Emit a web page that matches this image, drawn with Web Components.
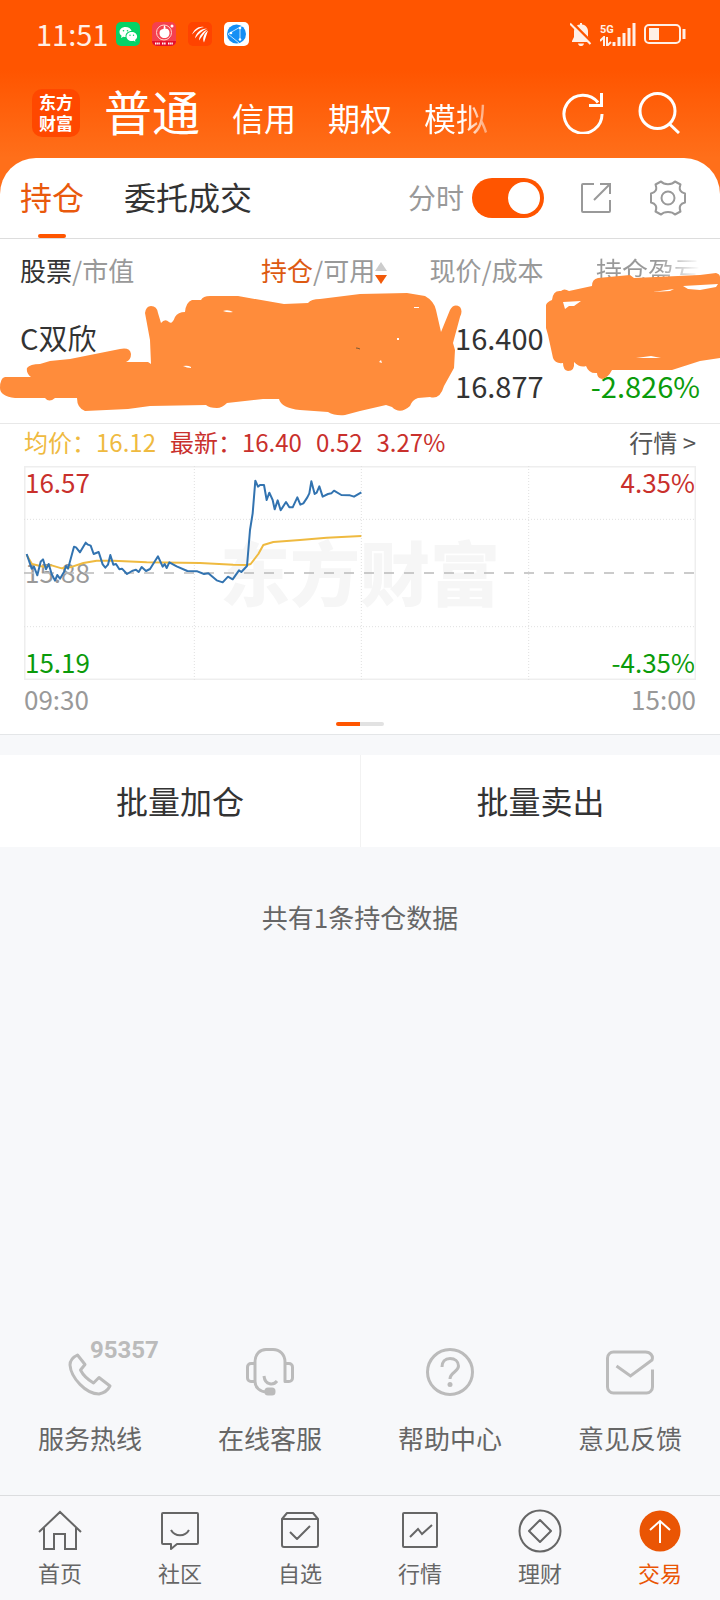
<!DOCTYPE html>
<html lang="zh-CN">
<head>
<meta charset="utf-8">
<meta name="viewport" content="width=device-width, initial-scale=1">
<title>东方财富 - 交易</title>
<style>
  body {
    margin: 0;
    background: #f7f8fa;
    color: #333;
    font-family: "Noto Sans CJK SC", "Noto Sans", sans-serif;
  }
</style>
</head>
<body>
<trade-app></trade-app>

<script>
const BASE = `
  :host, * { box-sizing: border-box; }
  p, input, th, td { margin: 0; padding: 0; }
  svg { display: block; fill: none; stroke: currentColor; }
  button { padding: 0; font: inherit; color: inherit; background: none; border: 0; cursor: pointer; }
  a { color: inherit; text-decoration: none; }
`;

class BaseElement extends HTMLElement {
  constructor() {
    super();
    this.attachShadow({ mode: 'open' });
  }

  connectedCallback() {
    this.shadowRoot.innerHTML = `<style>${BASE}${this.styles()}</style>${this.markup()}`;
  }
}

class StatusBar extends BaseElement {
  styles() {
    return `
      :host {
        display: flex;
        align-items: center;
        height: 68px;
        padding: 0 34px 0 36px;
        color: #ffefe6;
      }
      time { font-size: 29px; line-height: 32px; padding-bottom: 2px; }
      .apps { display: flex; gap: 12px; margin-left: 8px; }
      .state { display: flex; align-items: center; gap: 8px; margin-left: auto; }
      .signal { display: flex; align-items: flex-end; }
      .net { width: 12px; font: 700 11px/12px Roboto, sans-serif; }
    `;
  }

  markup() {
    return `
      <time>11:51</time>
      <div class="apps">
        <svg width="24" height="24" viewBox="0 0 24 24">
          <rect width="24" height="24" rx="5" fill="#06d266" stroke="none"/>
          <path fill="#fff" stroke="none" d="M9.500 5C6 5 3.500 7.200 3.500 10c0 1.600.8 2.900 2.100 3.800L5 16l2.400-1.200c.8.2 1.500.3 2.200.3-.6-3.400 2.300-6 6-6C15 6.600 12.500 5 9.500 5z"/>
          <path fill="#fff" stroke="none" d="M15.800 10c-3 0-5.300 2-5.300 4.500s2.300 4.500 5.300 4.500c.6 0 1.200-.1 1.800-.3l1.900 1-.5-1.700c1.300-.8 2.100-2.100 2.100-3.500 0-2.500-2.400-4.500-5.300-4.500z"/>
          <g fill="#06d266" stroke="none"><circle cx="7.500" cy="8.700" r=".8"/><circle cx="11.500" cy="8.700" r=".8"/><circle cx="14" cy="13.200" r=".7"/><circle cx="17.500" cy="13.200" r=".7"/></g>
        </svg>
        <svg width="24" height="24" viewBox="0 0 24 24">
          <rect width="24" height="24" rx="5" fill="#f5404e" stroke="none"/>
          <path d="M0 19h24a5 5 0 0 1-5 5H5a5 5 0 0 1-5-5z" fill="#e50f2a" stroke="none"/>
          <circle cx="12" cy="10.500" r="7.500" stroke="#ffd7d0"/>
          <path fill="#fff" stroke="none" d="M12 3c1 1 2 2 1.500 4 2-1 4 1 4 4 0 3-2 5-5 5s-5-2-5-5 2-4 4-4z"/>
          <circle cx="20" cy="4" r="1.500" fill="#fff" stroke="none"/>
          <path d="M3 21.500h5M10 21.500h4M16 21.500h5" stroke="#fff" stroke-width="2" stroke-dasharray="1.500 .6"/>
        </svg>
        <svg width="24" height="24" viewBox="0 0 24 24">
          <rect width="24" height="24" rx="5" fill="#ff4300" stroke="none"/>
          <path fill="#fff" stroke="none" d="M4 12.500C6 7 11 3.500 16 5c-4 .5-8 3-12 7.500zM7 16.500c1-6 6-10 12-10-5 2-8 5-12 10zM11 18.500c0-5 4-9 8.500-11C16.500 11 14 14 11 18.500zM16 20.500c-2-4 0-9 4-12-1.500 4-2.500 8-4 12z"/>
        </svg>
        <svg width="25" height="24" viewBox="0 0 25 24">
          <rect width="25" height="24" rx="5" fill="#fff" stroke="none"/>
          <circle cx="12.500" cy="12" r="9.500" fill="#158ff5" stroke="none"/>
          <path d="M18 4 4 12l11 9M16 6v12" stroke="#bfe4ff"/>
          <g fill="#fff" stroke="none"><circle cx="16" cy="6" r="1.300"/><circle cx="7" cy="11" r="1.300"/><circle cx="16" cy="17.500" r="1.300"/></g>
        </svg>
      </div>
      <div class="state">
        <svg width="22" height="24" viewBox="0 0 22 24">
          <path fill="currentColor" stroke="none" d="M10 1h2v1.500c4 .5 6 3.500 6 7V15l2 4v1H2v-1l2-4V9.500c0-3.500 2-6.500 6-7zM8 21.500h6c-.5 2-1.500 2.500-3 2.500s-2.500-.5-3-2.500z"/>
          <path d="M2.500 1 22 20.500" stroke="#ff5500" stroke-width="2.500"/>
          <path d="M0 1.500 20.500 22" stroke-width="2"/>
        </svg>
        <div class="signal">
          <div class="net">5G<svg width="12" height="10" viewBox="0 0 12 10"><path d="M0 5l4-4v9M7 1v9l4-4" stroke-width="2"/></svg></div>
          <svg width="24" height="23" viewBox="0 0 24 23"><path stroke-width="3" d="M2 23v-4M7 23v-9M12 23V10M17 23V5M22 23V0"/></svg>
        </div>
        <svg width="42" height="22" viewBox="0 0 42 22">
          <rect x="1" y="2" width="35" height="18" rx="4" stroke-width="2"/>
          <path d="M5 5h10v12H5z" fill="currentColor" stroke="none"/>
          <path d="M40 6v10" stroke-width="3"/>
        </svg>
      </div>
    `;
  }
}

class AccountNav extends BaseElement {
  styles() {
    return `
      :host {
        display: flex;
        align-items: center;
        height: 90px;
        padding: 0 40px 0 32px;
        color: #fff;
      }
      .logo {
        width: 48px;
        height: 48px;
        padding-top: 2px;
        border-radius: 10px;
        background: #ff4800;
        text-align: center;
        font-size: 17px;
        font-weight: 700;
        line-height: 21px;
      }
      nav {
        display: flex;
        align-items: baseline;
        gap: 32px;
        margin-left: 24px;
        font-size: 32px;
        line-height: 48px;
        white-space: nowrap;
      }
      nav .current { font-size: 48px; }
      nav a:last-child {
        background: linear-gradient(90deg, #fff 60%, rgba(255, 255, 255, 0.4));
        background-clip: text;
        color: transparent;
      }
      .tools { display: flex; gap: 34px; margin-left: auto; }
    `;
  }

  markup() {
    return `
      <div class="logo">东方<br>财富</div>
      <nav>
        <a class="current" href="#normal">普通</a>
        <a href="#credit">信用</a>
        <a href="#option">期权</a>
        <a href="#demo">模拟</a>
      </nav>
      <div class="tools">
        <button aria-label="刷新">
          <svg width="42" height="42" viewBox="0 0 42 42" stroke-width="3"><path d="M36 10.500A19 19 0 1 0 40 22M39.500 1v12.500H27"/></svg>
        </button>
        <button aria-label="搜索">
          <svg width="42" height="42" viewBox="0 0 42 42" stroke-width="3"><circle cx="19.500" cy="19" r="17.500"/><path d="M31.500 32 41 41"/></svg>
        </button>
      </div>
    `;
  }
}

class PanelTabs extends BaseElement {
  styles() {
    return `
      :host {
        display: flex;
        align-items: center;
        height: 81px;
        padding: 0 34px 0 20px;
        border-bottom: 1px solid #ddd;
      }
      nav { display: flex; gap: 40px; align-self: stretch; font-size: 32px; }
      nav a { display: flex; flex-direction: column; align-items: center; line-height: 76px; }
      nav .current { color: #e9590c; }
      nav .current::after { content: ""; width: 28px; height: 4px; border-radius: 2px; background: #ff5500; }
      .tools { display: flex; align-items: center; margin-left: auto; color: #999; }
      label { font-size: 28px; line-height: 40px; padding-bottom: 2px; }
      input {
        appearance: none;
        width: 72px;
        height: 40px;
        margin: 0 36px 0 8px;
        padding: 4px;
        border-radius: 20px;
        background: #ccc;
      }
      input::before { content: ""; display: block; width: 32px; height: 32px; border-radius: 50%; background: #fff; }
      input:checked { background: #ff5500; }
      input:checked::before { margin-left: auto; }
      button + button { margin-left: 38px; }
    `;
  }

  markup() {
    return `
      <nav>
        <a class="current" href="#positions">持仓</a>
        <a href="#orders">委托成交</a>
      </nav>
      <div class="tools">
        <label for="minute">分时</label>
        <input id="minute" type="checkbox" role="switch" checked>
        <button aria-label="分享">
          <svg width="32" height="32" viewBox="0 0 32 32" stroke-width="2"><path d="M14 2H3a1 1 0 0 0-1 1v26a1 1 0 0 0 1 1h26a1 1 0 0 0 1-1V18M20 2h10v10M30 2 14 18"/></svg>
        </button>
        <button aria-label="设置">
          <svg width="36" height="36" viewBox="0 0 36 36" stroke-width="2" stroke-linejoin="round"><path d="M11 1.500c3 3.500 11 3.500 14 0l5.500 3c-2 5 0 8 4.500 9v9c-4.500 1-6.500 4-4.500 9l-5.500 3c-3-3.500-11-3.500-14 0l-5.500-3c2-5 0-8-4.500-9v-9c4.500-1 6.500-4 4.500-9z"/><circle cx="18" cy="18" r="6.500"/></svg>
        </button>
      </div>
    `;
  }
}

class HoldingsTable extends BaseElement {
  styles() {
    return `
      :host {
        display: block;
        position: relative;
        padding: 13px 20px 22px;
        border-bottom: 1px solid #e8e8e8;
      }
      table { width: 100%; table-layout: fixed; border-collapse: collapse; text-align: right; white-space: nowrap; }
      th { height: 40px; padding-bottom: 4px; font-size: 26px; font-weight: 400; line-height: 32px; color: #999; }
      th:first-child, td:first-child { width: 31%; text-align: left; }
      th b { font-weight: 400; color: #333; }
      th .sorted { color: #dd5a12; }
      th svg { display: inline-block; vertical-align: -4px; }
      td { height: 48px; font-size: 29px; line-height: 32px; vertical-align: bottom; }
      tr.first td { height: 61px; }
      .fade {
        background: linear-gradient(90deg, #999 60%, #fff);
        background-clip: text;
        color: transparent;
      }
      .down { color: #0b9b0b; }
      .marker { position: absolute; left: 0; top: 0; width: 100%; height: 184px; }
    `;
  }

  markup() {
    return `
      <table>
        <thead>
          <tr>
            <th scope="col"><b>股票</b>/市值</th>
            <th scope="col"><b class="sorted">持仓</b>/可用<svg width="12" height="24" viewBox="0 0 12 24"><path d="M6 1l6 9H0z" fill="#ccc" stroke="none"/><path d="M0 14h12l-6 9z" fill="#f25a0a" stroke="none"/></svg></th>
            <th scope="col">现价/成本</th>
            <th scope="col"><span class="fade">持仓盈亏</span></th>
          </tr>
        </thead>
        <tbody>
          <tr class="first"><td>C双欣</td><td></td><td>16.400</td><td></td></tr>
          <tr><td></td><td></td><td>16.877</td><td class="down">-2.826%</td></tr>
        </tbody>
      </table>
      <svg class="marker" viewBox="0 239 720 184" preserveAspectRatio="none" aria-hidden="true">
        <g fill="#ff8c3b" stroke="none">
          <path d="M145 313Q146 306 151 306 157 306 158 313L161 323Q165 318 169 322 172 325 175 317 178 312 185 312 186 302 192 300L201 300Q203 296 210 296L238 296 284 304 308 303Q311 299 320 299L360 294 407 293 425 296Q434 301 436 310L441 332 450 310Q454 303 460 307 463 311 460 317L453 343 455 350 454 368 444 386Q440 400 430 397L418 398Q412 400 410 406 400 415 392 407L386 405 360 411 345 415Q335 416 328 412L300 410Q281 408 279 399L263 399 227 403Q222 408 217 408 209 408 206 405L150 406 128 409 85 411Q77 408 77 398L55 398Q49 403 45 398L15 398Q0 396 0 388 0 378 5 377L31 377Q26 373 27 368 30 364 40 364L50 361 70 359 120 349Q130 347 131 354 131 360 126 362L148 362 151 364 150 340Z"/>
          <path d="M546 305Q547 302 552 300 553 290 561 291 564 288 569 291L592 286Q592 279 598 278L630 275 634 278 700 275 716 273Q720 274 720 277V358L700 361 672 370 612 370Q608 378 602 379 597 378 597 373 589 374 586 366 580 368 574 362 575 371 568 371 563 370 563 363 555 364 553 358L548 335 546 328Z"/>
        </g>
        <g fill="#fff" stroke="none">
          <path d="M563 302 581 301 574 306 569 306 565 309ZM653 292 674 289 670 291ZM683 286 718 284 716 287 700 290 688 289ZM636 358 651 356 661 358Z"/>
          <path d="M223 311q5-2 10 1-5 1-10-1zM183 366q5-1 8 1v1q-4 0-8-2zM414 307h5v1h-5zM397 338h2v2h-2zM379 362l2-2 1 3z"/>
        </g>
        <path d="M356 348q2 0 4 1" stroke="#7a5836"/>
      </svg>
    `;
  }
}

class MinuteChart extends BaseElement {
  styles() {
    return `
      :host { display: block; padding: 0 24px 8px; border-bottom: 1px solid #e4e6e8; }
      header { display: flex; gap: 14px; height: 42px; font-size: 24px; line-height: 36px; white-space: nowrap; }
      header a { margin-left: auto; color: #555; }
      .avg { color: #efba40; }
      .up { color: #c9302c; }
      .down { color: #0b9b0b; }
      .plot { display: grid; grid-template: 214px / 1fr; }
      .plot > * { grid-area: 1 / 1; }
      .plot svg { width: 100%; height: 100%; }
      .mark { place-self: center; font-size: 70px; font-weight: 900; line-height: 80px; padding-bottom: 4px; color: #f6f6f6; }
      .scale { display: flex; flex-direction: column; justify-content: space-between; padding: 0 1px 2px; font-size: 26px; line-height: 32px; color: #999; }
      .scale.right { text-align: right; }
      footer { display: flex; justify-content: space-between; font-size: 26px; line-height: 38px; color: #999; }
      .pager { width: 48px; height: 4px; margin: 4px auto 0; border-radius: 2px; background: linear-gradient(90deg, #ff5500 50%, #e2e2e2 50%); }
    `;
  }

  markup() {
    return `
      <header>
        <span class="avg">均价：16.12</span>
        <span class="up">最新：16.40</span>
        <span class="up">0.52</span>
        <span class="up">3.27%</span>
        <a href="#quote">行情 &gt;</a>
      </header>
      <div class="plot">
        <div class="mark">东方财富</div>
        <div class="scale"><span class="up">16.57</span><span>15.88</span><span class="down">15.19</span></div>
        <div class="scale right"><span class="up">4.35%</span><span class="down">-4.35%</span></div>
        <svg viewBox="72 138 2016 642" preserveAspectRatio="none">
          <rect x="74" y="140" width="2012" height="638" stroke="#eee" stroke-width="5"/>
          <path d="M72 298H2088M72 620H2088M583 138V780M1084 138V780M1586 138V780" stroke="#e0e0e0" stroke-width="3" stroke-dasharray="3 6"/>
          <path d="M72 459H2088" stroke="#bbb" stroke-width="5" stroke-dasharray="30 30"/>
          <polyline stroke="#efba40" stroke-width="6" stroke-linejoin="round" points="80,405 96,432 130,440 155,436 185,445 210,442 250,429 290,422 340,422 440,427 600,429 700,434 741,435 752,432 775,402 790,375 820,366 900,360 980,353 1084,348"/>
          <polyline stroke="#3273b0" stroke-width="6" stroke-linejoin="round" points="80,402 95,446 102,440 112,466 122,425 129,418 138,448 146,432 155,462 165,482 172,465 180,476 192,456 198,438 204,446 222,380 228,382 240,397 257,368 264,374 272,377 281,402 296,396 308,433 316,443 324,434 331,405 340,434 348,432 358,448 366,446 381,462 396,453 408,449 416,456 425,441 438,453 450,447 474,409 488,440 494,432 500,444 508,427 530,439 562,453 592,454 612,462 625,460 650,481 668,487 684,470 698,478 717,451 724,456 741,438 750,330 758,280 766,182 774,200 780,195 792,195 800,240 808,218 818,240 824,268 833,241 842,271 858,246 868,262 878,262 892,232 901,254 910,250 922,232 928,220 934,184 944,222 950,218 958,199 968,230 984,222 994,220 1002,212 1024,225 1050,226 1062,230 1084,217"/>
        </svg>
      </div>
      <footer><time>09:30</time><time>15:00</time></footer>
      <div class="pager"></div>
    `;
  }
}

class BatchActions extends BaseElement {
  styles() {
    return `
      :host { display: grid; grid-template-columns: 1fr 1fr; margin-top: 20px; background: #fff; }
      button { height: 92px; padding-bottom: 2px; font-size: 32px; }
      button + button { border-left: 1px solid #f2f2f2; }
    `;
  }

  markup() {
    return '<button>批量加仓</button><button>批量卖出</button>';
  }
}

class ServiceLink extends BaseElement {
  styles() {
    return `
      :host { display: block; position: relative; }
      a { display: flex; flex-direction: column; align-items: center; gap: 26px; font-size: 26px; line-height: 32px; color: #666; }
      ::slotted(svg) { width: 48px; height: 48px; color: #bbb; stroke-width: 3; }
      .badge { position: absolute; left: 50%; top: -12px; font: 700 24px/28px Roboto, sans-serif; color: #bbb; }
    `;
  }

  markup() {
    const badge = this.getAttribute('badge');
    return `
      <a href="#service"><slot></slot><span>${this.getAttribute('label')}</span></a>
      ${badge ? `<span class="badge">${badge}</span>` : ''}
    `;
  }
}

class TabItem extends BaseElement {
  styles() {
    return `
      :host { display: block; color: #666; }
      :host([active]) { color: #ea5504; }
      a { display: flex; flex-direction: column; align-items: center; gap: 3px; font-size: 22px; line-height: 32px; }
      ::slotted(svg) { width: 44px; height: 44px; stroke-width: 2; }
    `;
  }

  markup() {
    return `<a href="#tab"><slot></slot><span>${this.getAttribute('label')}</span></a>`;
  }
}

class TradeApp extends BaseElement {
  styles() {
    return `
      :host {
        display: flex;
        flex-direction: column;
        min-height: 100vh;
        background: #f7f8fa;
      }
      .top { padding-bottom: 36px; background: linear-gradient(#ff5500 70px, #ff6f1a 158px); }
      .panel { margin-top: -36px; border-radius: 36px 36px 0 0; background: #fff; overflow: hidden; }
      .count { padding-top: 52px; text-align: center; font-size: 26px; line-height: 36px; color: #666; }
      .services { display: grid; grid-template-columns: repeat(4, 1fr); margin-top: auto; padding-bottom: 41px; }
      .tabs { display: grid; grid-template-columns: repeat(6, 1fr); height: 105px; padding-top: 13px; border-top: 1px solid #dcdddf; background: #f8f8fa; }
    `;
  }

  markup() {
    return `
      <div class="top">
        <status-bar></status-bar>
        <account-nav></account-nav>
      </div>
      <div class="panel">
        <panel-tabs></panel-tabs>
        <holdings-table></holdings-table>
        <minute-chart></minute-chart>
      </div>
      <batch-actions></batch-actions>
      <p class="count">共有1条持仓数据</p>
      <div class="services">
        <service-link label="服务热线" badge="95357">
          <svg viewBox="0 0 48 48" stroke-linejoin="round"><path d="M11.500 7 19 16.500 14.500 22c3 6 8 10 13 13L33 29.500l11 8.500c-2 4-6 7-11 8C20 46 5 30 4 17c0-5 3-8 7.500-10z"/></svg>
        </service-link>
        <service-link label="在线客服">
          <svg viewBox="0 0 48 48" stroke-linejoin="round"><path d="M9 33.500V14C9 6 14 1.500 20 1.500h7c7 0 12 5 12 12.500v19.500M9 15.500H5A3.500 3.500 0 0 0 1.500 19v11A3.500 3.500 0 0 0 5 33.500h4c0 6 5 10.500 12 10.500M39 15.500h4a3.500 3.500 0 0 1 3.500 3.500v11a3.500 3.500 0 0 1-3.500 3.500h-4zM18 28c1 10 10 9 13 5"/><rect x="20" y="41" width="8" height="5" rx="2" fill="#bbb"/></svg>
        </service-link>
        <service-link label="帮助中心">
          <svg viewBox="0 0 48 48"><circle cx="24" cy="24" r="22.500"/><path d="M16 19c0-5 3-8.500 8-8.500s8.500 3 8.500 7.500c0 6-8.500 6-8.500 13"/><circle cx="24" cy="36.500" r="2.500" fill="#bbb" stroke="none"/></svg>
        </service-link>
        <service-link label="意见反馈">
          <svg viewBox="0 0 48 48"><path d="M46.500 21.500V39a6 6 0 0 1-6 6h-33a6 6 0 0 1-6-6V10a6 6 0 0 1 6-6h32c5 0 8 4 6.500 8L24.500 28 10.500 18"/></svg>
        </service-link>
      </div>
      <nav class="tabs">
        <tab-item label="首页">
          <svg viewBox="0 0 44 44"><path d="M1 23 22 3l21 20M6 19v21h10V25h11v15h11V19"/></svg>
        </tab-item>
        <tab-item label="社区">
          <svg viewBox="0 0 44 44" stroke-linejoin="round"><path d="M5 4h34a1 1 0 0 1 1 1v29a1 1 0 0 1-1 1H19l-6 5v-5H5a1 1 0 0 1-1-1V5a1 1 0 0 1 1-1zM13 21c4 7 14 7 18 0"/></svg>
        </tab-item>
        <tab-item label="自选">
          <svg viewBox="0 0 44 44" stroke-linejoin="round"><path d="M4 10 9 4h26l5 6v26a2 2 0 0 1-2 2H6a2 2 0 0 1-2-2zM4 10h36M12 23l7 7 13-13"/></svg>
        </tab-item>
        <tab-item label="行情">
          <svg viewBox="0 0 44 44"><rect x="5" y="4" width="34" height="34" rx="1"/><path d="M12 28l8-8 4 5 10-9"/></svg>
        </tab-item>
        <tab-item label="理财">
          <svg viewBox="0 0 44 44" stroke-linejoin="round"><circle cx="22" cy="22" r="20.500"/><path d="M22 11l11 11-11 11-11-11z"/></svg>
        </tab-item>
        <tab-item label="交易" active>
          <svg viewBox="0 0 44 44"><circle cx="22" cy="22" r="20.500" fill="#ea5504" stroke="none"/><path d="M22 34V12M12 21l10-9 10 9" stroke="#fff"/></svg>
        </tab-item>
      </nav>
    `;
  }
}

customElements.define('status-bar', StatusBar);
customElements.define('account-nav', AccountNav);
customElements.define('panel-tabs', PanelTabs);
customElements.define('holdings-table', HoldingsTable);
customElements.define('minute-chart', MinuteChart);
customElements.define('batch-actions', BatchActions);
customElements.define('service-link', ServiceLink);
customElements.define('tab-item', TabItem);
customElements.define('trade-app', TradeApp);
</script>
</body>
</html>
